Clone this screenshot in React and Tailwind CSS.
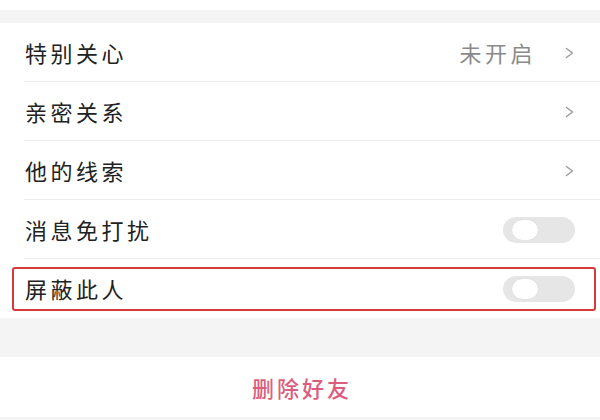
import React from 'react'

const Chevron = () => (
  <svg className="w-[9px] h-[12px] text-[#9a9a9a]" viewBox="0 0 9 12" fill="none" stroke="currentColor">
    <path d="M1.5 1.5l6 4.5-6 4.5" strokeWidth={1.4} strokeLinecap="round" strokeLinejoin="round" />
  </svg>
)

const Toggle = () => (
  <div className="w-[72px] h-[26px] rounded-full bg-[#e6e6e6] flex items-center pl-[9px]">
    <div className="w-[26px] h-[20px] rounded-full bg-white shadow-[0_0_1px_rgba(0,0,0,0.15)]" />
  </div>
)

const Row = ({ label, children, divider = true }) => (
  <div className="h-[59px] flex items-center pl-[25px] pr-[26px] relative">
    <span className="flex-1 text-[22px] tracking-[3.5px] text-[#222]">{label}</span>
    {children}
    {divider && <div className="absolute left-[24px] right-0 bottom-0 h-px bg-[#ececec]" />}
  </div>
)

export default function App() {
  return (
    <div className="w-[600px] h-[420px] bg-[#f4f4f4] overflow-hidden" style={{ fontFamily: '"Noto Sans CJK SC", "Noto Sans", sans-serif' }}>
      <div className="h-[10px] bg-white" />
      <div className="h-[13px]" />

      <div className="bg-white">
        <Row label="特别关心">
          <span className="text-[22px] tracking-[3.5px] text-[#8a8a8a] mr-[29px]">未开启</span>
          <Chevron />
        </Row>
        <Row label="亲密关系">
          <Chevron />
        </Row>
        <Row label="他的线索">
          <Chevron />
        </Row>
        <Row label="消息免打扰">
          <div className="-mr-[1px]"><Toggle /></div>
        </Row>
        <div className="h-[59px] flex items-center">
          <div className="ml-[12px] mr-[4px] flex-1 h-[44px] border-2 border-[#d63a3a] rounded-[3px] flex items-center pl-[11px] pr-[19px]">
            <span className="flex-1 text-[22px] tracking-[3.5px] text-[#222]">屏蔽此人</span>
            <Toggle />
          </div>
        </div>
      </div>

      <div className="h-[39px]" />

      <div className="h-[60px] bg-white flex items-center justify-center">
        <span className="text-[22px] tracking-[3px] font-medium text-[#dc5e7c] pl-[4px]">删除好友</span>
      </div>
    </div>
  )
}
